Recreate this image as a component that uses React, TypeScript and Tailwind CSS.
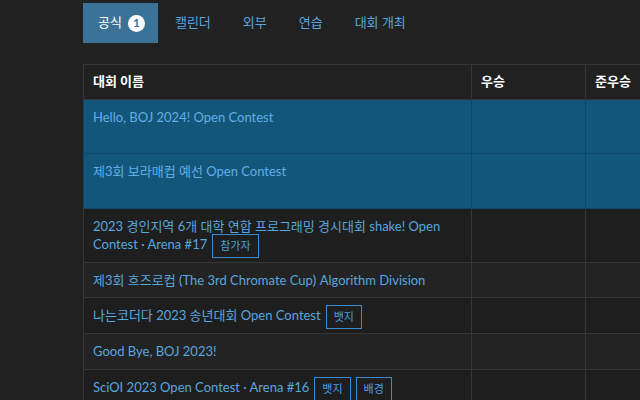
import React from "react";

const font = { fontFamily: '"Lato", "Noto Sans CJK KR", sans-serif' };

function Badge({ children }: { children: React.ReactNode }) {
  return (
    <span className="ml-[5px] my-[-3px] inline-block border border-[#3a8ad3] px-[7px] text-[11px] leading-[22px] text-[#4d9fe0] align-middle">
      {children}
    </span>
  );
}

type Row = { name: string; badges?: string[]; h: string; blue?: boolean; dark?: boolean };

const rows: Row[] = [
  { name: "Hello, BOJ 2024! Open Contest", h: "h-[54px]", blue: true },
  { name: "제3회 보라매컵 예선 Open Contest", h: "h-[55px]", blue: true },
  { name: "2023 경인지역 6개 대학 연합 프로그래밍 경시대회 shake! Open Contest · Arena #17", badges: ["참가자"], h: "h-[54px]", dark: true },
  { name: "제3회 흐즈로컵 (The 3rd Chromate Cup) Algorithm Division", h: "h-[35px]" },
  { name: "나는코더다 2023 송년대회 Open Contest", badges: ["뱃지"], h: "h-[36px]", dark: true },
  { name: "Good Bye, BOJ 2023!", h: "h-[36px]" },
  { name: "SciOI 2023 Open Contest · Arena #16", badges: ["뱃지", "배경"], h: "h-[36px]", dark: true },
];

export default function App() {
  return (
    <div className="w-[640px] h-[400px] overflow-hidden bg-[#212121]" style={font}>
      <div className="pl-[83px] pt-[3px] flex gap-[2px] text-[13px]">
        <div className="h-[40px] pl-[15px] pr-[13px] flex items-center bg-[#3b7297] text-white">
          <span>공식</span>
          <span className="ml-[6px] w-[17px] h-[17px] rounded-full bg-white text-[#3b7297] text-[12px] font-bold flex items-center justify-center leading-none">1</span>
        </div>
        {["캘린더", "외부", "연습", "대회 개최"].map((t) => (
          <div key={t} className="h-[40px] px-[15px] flex items-center text-[#5aa6df]">
            {t}
          </div>
        ))}
      </div>
      <div className="pl-[83px] pt-[21px]">
        <table className="w-[1000px] border-collapse table-fixed text-[13px]">
          <colgroup>
            <col className="w-[388px]" />
            <col className="w-[114px]" />
            <col className="w-[114px]" />
            <col />
          </colgroup>
          <thead>
            <tr className="h-[35px] bg-[#212121]">
              {["대회 이름", "우승", "준우승", "시작"].map((h) => (
                <th key={h} className="border border-[#363636] px-[9px] text-left font-bold text-white align-middle">
                  {h}
                </th>
              ))}
            </tr>
          </thead>
          <tbody>
            {rows.map((r, i) => {
              const bg = r.blue ? "bg-[#12577a]" : r.dark ? "bg-[#1e1e1e]" : "bg-[#232323]";
              const bc = r.blue ? "border-[#0f4866]" : "border-[#363636]";
              return (
                <tr key={i} className={`${r.h} ${bg}`}>
                  <td className={`border ${bc} px-[9px] pt-[8px] pb-[7px] align-top leading-[18px]`}>
                    <span className={r.blue ? "text-[#62ade6]" : "text-[#5aa6df]"}>{r.name}</span>
                    {r.badges?.map((b) => (
                      <Badge key={b}>{b}</Badge>
                    ))}
                  </td>
                  <td className={`border ${bc}`}></td>
                  <td className={`border ${bc}`}></td>
                  <td className={`border ${bc}`}></td>
                </tr>
              );
            })}
          </tbody>
        </table>
      </div>
    </div>
  );
}
